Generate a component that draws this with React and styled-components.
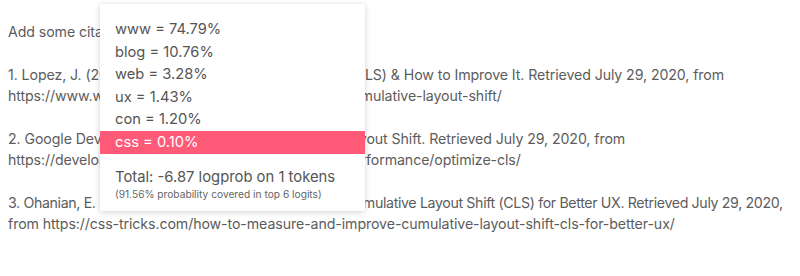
import React from "react";
import styled, { createGlobalStyle } from "styled-components";

const GlobalStyle = createGlobalStyle`
  html, body {
    margin: 0;
    padding: 0;
    background: #fff;
  }
  body {
    font-family: Inter, "Liberation Sans", sans-serif;
  }
`;

const TOKENS = [
  { label: "www", value: "74.79%" },
  { label: "blog", value: "10.76%" },
  { label: "web", value: "3.28%" },
  { label: "ux", value: "1.43%" },
  { label: "con", value: "1.20%" },
  { label: "css", value: "0.10%", active: true },
];

export default function App() {
  return (
    <Page>
      <GlobalStyle />
      <Doc>
        <Para>Add some citations below.</Para>
        <Para>
          1. Lopez, J. (2020). Explain Cumulative Layout Shift (CLS) &amp; How to Improve It. Retrieved July 29, 2020, from
          <br />
          https://www.webfx.com/blog/web-design/what-is-cumulative-layout-shift/
        </Para>
        <Para>
          2. Google Developers. (2020). Reduce Cumulative Layout Shift. Retrieved July 29, 2020, from
          <br />
          https://developers.google.com/web/fundamentals/performance/optimize-cls/
        </Para>
        <Para>
          <Line $tight>
            3. Ohanian, E. (2020). How To Measure and Improve Cumulative Layout Shift (CLS) for Better UX. Retrieved July 29, 2020,
          </Line>
          <Line>from https://css-tricks.com/how-to-measure-and-improve-cumulative-layout-shift-cls-for-better-ux/</Line>
        </Para>
      </Doc>
      <Popup>
        <TokenList>
          {TOKENS.map((t) => (
            <TokenRow key={t.label} $active={t.active}>
              {t.label} = {t.value}
            </TokenRow>
          ))}
        </TokenList>
        <Summary>
          <Total>Total: -6.87 logprob on 1 tokens</Total>
          <Note>(91.56% probability covered in top 6 logits)</Note>
        </Summary>
      </Popup>
    </Page>
  );
}

const Page = styled.div`
  position: relative;
  width: 800px;
  height: 276px;
  overflow: hidden;
`;

const Doc = styled.div`
  padding: 21px 0 0 8px;
  width: 792px;
  color: #5c5c5c;
  font-size: 14.2px;
  line-height: 21.5px;
  letter-spacing: -0.1px;
`;

const Para = styled.p`
  margin: 0 0 21px;
  white-space: nowrap;
`;

const Line = styled.span`
  display: block;
  letter-spacing: ${(p) => (p.$tight ? "-0.36px" : "-0.1px")};
`;

const Popup = styled.div`
  position: absolute;
  left: 100px;
  top: 4px;
  width: 265px;
  height: 207px;
  background: #fff;
  box-shadow: 0 1px 6px rgba(0, 0, 0, 0.18);
  border-radius: 2px;
  display: flex;
  flex-direction: column;
  padding-top: 14px;
  box-sizing: border-box;
`;

const TokenList = styled.div`
  display: flex;
  flex-direction: column;
`;

const TokenRow = styled.div`
  height: 22.6px;
  line-height: 22.6px;
  padding-left: 15px;
  font-size: 14.7px;
  color: ${(p) => (p.$active ? "#fff" : "#555")};
  background: ${(p) => (p.$active ? "#ff5a78" : "transparent")};
`;

const Summary = styled.div`
  padding: 14px 0 0 15px;
  color: #555;
`;

const Total = styled.div`
  font-size: 14.8px;
  line-height: 18px;
`;

const Note = styled.div`
  font-size: 10.2px;
  line-height: 16px;
  color: #666;
`;
